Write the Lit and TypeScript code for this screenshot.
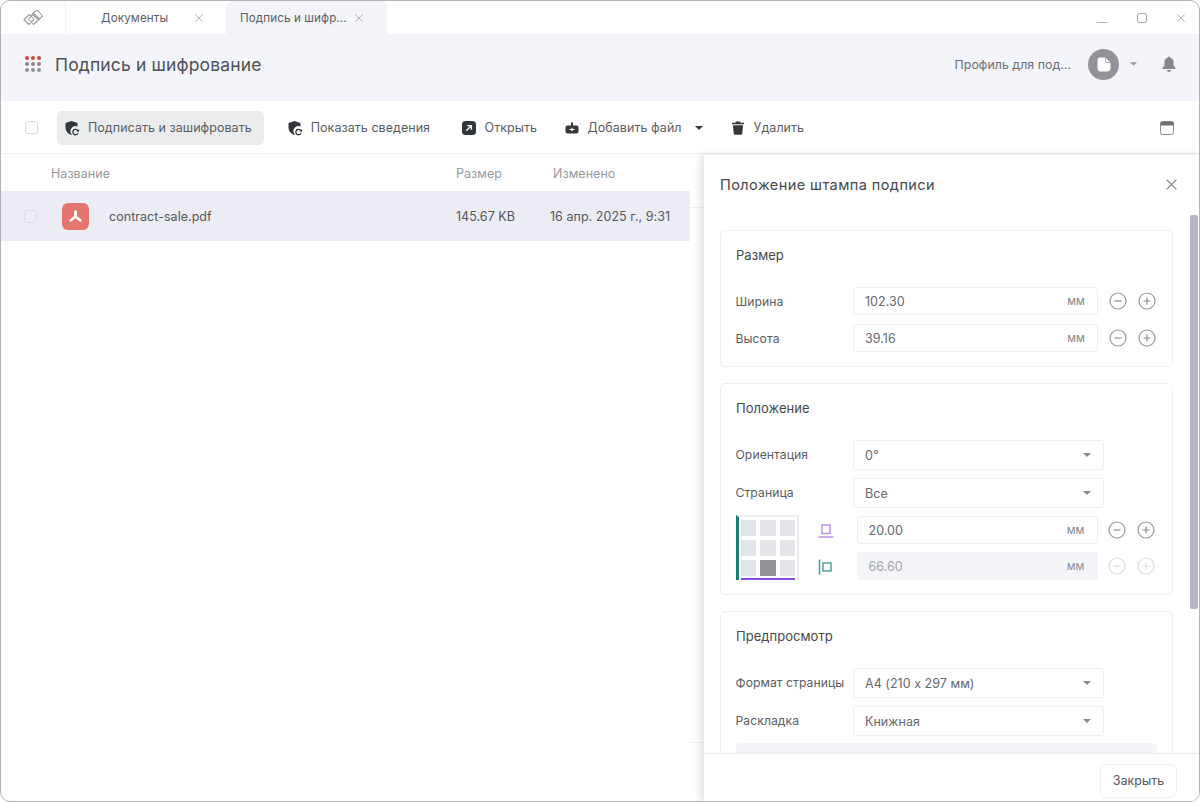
import { LitElement, html, css, svg } from "lit";
import { customElement } from "lit/decorators.js";

const shieldIcon = html`<svg class="ico" viewBox="0 0 16 16"><path fill="#33363a" d="M7.500 1 13.500 3v3.600a5 5 0 0 0-6 7.600l.6.600-.6.200C3.800 13.800 1.500 11 1.500 7.300V3z"/><path fill="none" stroke="#33363a" stroke-width="1.300" d="M14.200 11.400a2.700 2.700 0 1 0-.2 1.800"/><path fill="#33363a" d="M12.300 11.500h2.800V9z"/></svg>`;
const openIcon = html`<svg class="ico" viewBox="0 0 16 16"><rect x="1" y="1" width="14" height="14" rx="3.500" fill="#33363a"/><path d="M5.300 10.700 10 6M6.300 5.600H10.400V9.700" fill="none" stroke="#fff" stroke-width="1.300"/></svg>`;
const addIcon = html`<svg class="ico" viewBox="0 0 16 16"><path fill="#33363a" d="M3.500 5.500H7V2.500h2v3h3.500a2 2 0 0 1 2 2v4a2 2 0 0 1-2 2h-9a2 2 0 0 1-2-2v-4a2 2 0 0 1 2-2z"/><path d="M5.500 9.500h5M8 7.800v3.400" stroke="#fff" stroke-width="1.200"/></svg>`;
const trashIcon = html`<svg class="ico" viewBox="0 0 16 16"><path fill="#33363a" d="M6 1.500h4l.6 1.200H14v1.600H2V2.700h3.400zM3 5.300h10l-.7 8.200a1.500 1.500 0 0 1-1.500 1.300H5.200a1.500 1.500 0 0 1-1.500-1.300z"/></svg>`;
const closeIcon = (s: number, c: string) => html`<svg class="x" width=${s} height=${s} viewBox="0 0 12 12"><path d="M1.500 1.500l9 9M10.500 1.500l-9 9" stroke=${c} stroke-width="1" fill="none"/></svg>`;
const caret = html`<svg class="caret" viewBox="0 0 8 4"><path d="M0 0h8L4 4z"/></svg>`;

const round = (plus: boolean, off = false) => html`<svg class="round" viewBox="0 0 18 18" width="18" height="18"><circle cx="9" cy="9" r="8" fill="none" stroke=${off ? "#dcdde0" : "#96989c"} stroke-width="1.200"/><path d=${plus ? "M5.500 9h7M9 5.500v7" : "M5.500 9h7"} stroke=${off ? "#dcdde0" : "#8a8c90"} stroke-width="1.200"/></svg>`;

const dots = [0, 1, 2].flatMap((r) =>
  [0, 1, 2].map((c) => svg`<circle cx=${2 + c * 6} cy=${2 + r * 6} r="2" fill=${r === 0 ? "#c9473d" : r === 1 ? "#96827f" : "#8f9095"}/>`)
);

@customElement("app-root")
export class AppRoot extends LitElement {
  static styles = css`
    :host { display: block; width: 1200px; height: 802px; font-family: Inter, "Liberation Sans", sans-serif; color: #5a5d61; font-size: 12.500px; letter-spacing: 0.040px; }
    * { box-sizing: border-box; }
    .win { position: relative; width: 1200px; height: 802px; background: #fff; border: 1px solid #b4b4b6; border-radius: 10px; overflow: hidden; display: flex; flex-direction: column; }
    .tabs { height: 33px; flex: none; display: flex; align-items: stretch; }
    .logo { width: 65px; display: flex; align-items: center; justify-content: center; border-right: 1px solid #f1f1f3; }
    .tab { display: flex; align-items: center; font-size: 11.700px; letter-spacing: 0.080px; white-space: nowrap; }
    .t1 { width: 160px; padding-left: 35px; gap: 25.500px; }
    .t2 { width: 160.500px; padding-left: 14px; gap: 7px; background: #f3f5fa; border-radius: 6px 6px 0 0; }
    .winbtns { margin-left: auto; display: flex; align-items: center; padding-right: 13.500px; }
    .winbtns svg { display: block; }
    .w1 { margin-right: 30px; } .w2 { margin-right: 29px; }
    .band { height: 67px; flex: none; background: #f3f5fa; display: flex; align-items: center; padding: 0 23px 7px 24px; }
    .band h1 { font-size: 17.500px; font-weight: 400; margin: 0 0 0 14px; letter-spacing: 0.140px; color: #4e5155; }
    .prof { margin-left: auto; display: flex; align-items: center; }
    .ptext { color: #6b6e72; font-size: 12.350px; margin-right: 17px; }
    .avatar { width: 31px; height: 31px; border-radius: 50%; background: #929398; display: flex; align-items: center; justify-content: center; margin-right: 11px; }
    .prof .caret { width: 7px; height: 4px; fill: #9a9ca0; margin-right: 25px; }
    .bar { height: 53px; flex: none; display: flex; align-items: center; padding: 1px 25px 0 24px; border-bottom: 1px solid #f0f0f2; }
    .check { width: 13px; height: 13px; border: 1px solid #d9dadc; border-radius: 3px; background: #fff; flex: none; }
    .act { height: 34px; display: flex; align-items: center; gap: 8px; padding: 0 12px 0 7px; border-radius: 5px; white-space: nowrap; margin-left: 8px; }
    .act.on { background: #ebecee; margin-left: 19px; }
    .act.info2 { margin-left: 16px; }
    .act.open { margin-left: 11.500px; }
    .act.add { margin-left: 7.500px; }
    .ico { width: 16px; height: 16px; flex: none; }
    .act .caret { width: 8px; height: 4px; fill: #33363a; margin-left: 5px; }
    .spacer { margin-left: auto; }
    .thead { height: 37px; flex: none; display: grid; grid-template-columns: 50px 405px 97px auto; align-items: center; color: #96989c; width: 689px; padding-top: 1px; }
    .row { height: 50px; flex: none; width: 689px; background: #ecedf4; display: grid; grid-template-columns: 61px 47px 347px 94px auto; align-items: center; }
    .row .check { margin-left: 23px; background: #eceef3; border-color: #dcdde2; }
    .pdf { width: 27px; height: 27px; border-radius: 6px; background: #e5766f; display: flex; align-items: center; justify-content: center; }
    .row span { color: #55585c; white-space: nowrap; }
    .stub { position: absolute; left: 689px; width: 16px; height: 1px; background: #efeff2; }
    .panel { position: absolute; left: 703px; top: 154px; width: 496px; bottom: 0; background: #fff; box-shadow: -3px 0 8px rgba(0,0,0,.13); display: flex; flex-direction: column; }
    .phead { height: 60px; flex: none; display: flex; align-items: center; justify-content: space-between; padding: 0 22.500px 2px 16px; }
    .phead h2 { margin: 0; font-size: 14.500px; font-weight: 400; color: #45484c; letter-spacing: 0.430px; }
    .pbody { flex: 1; min-height: 0; overflow: hidden; padding: 15px 27px 0 16px; display: flex; flex-direction: column; gap: 16px; position: relative; }
    .card { border: 1px solid #eeeff2; border-radius: 5px; padding: 0 15px; flex: none; }
    .card h3 { margin: 0 0 6px; font-size: 13px; font-weight: 400; color: #45484c; height: 50px; line-height: 48px; }
    .c1 { height: 137px; } .c2 { height: 212px; }
    .frow { display: flex; align-items: center; }
    .frow label { width: 117px; flex: none; font-size: 12.200px; letter-spacing: 0.050px; position: relative; left: -0.500px; }
    .sr label { top: -1px; }
    .inp { border: 1px solid #eeeff2; border-radius: 3px; height: 28px; display: flex; align-items: center; justify-content: space-between; padding: 0 12px 0 11px; background: #fff; flex: none; color: #66696d; }
    .unit { color: #85878b; font-size: 11.500px; }
    .num { width: 245px; }
    .short { width: 241px; }
    .r1 { margin-bottom: 9px; }
    .round { margin-left: 10.500px; flex: none; display: block; }
    .round + .round { margin-left: 11px; }
    .sel { width: 251px; height: 30px; }
    .sel .caret { width: 8px; height: 4px; fill: #85878b; }
    .sr { margin-bottom: 8px; }
    .pos { display: flex; align-items: flex-start; margin-top: -1px; }
    .grid { width: 63px; height: 65px; flex: none; position: relative; margin-left: -0.500px; padding: 3px 0 0 2px; display: grid; grid-template-columns: repeat(3, 15.500px); grid-template-rows: repeat(3, 15.500px); gap: 4.500px 4px; align-content: start; border-left: 3px solid #1d7d74; border-right: 2px solid #e9eaec; border-top: 2px solid #eeeff1; }
    .grid i { background: #e3e5e9; display: block; }
    .grid i.sel2 { background: #929398; }
    .grid::after { content: ""; position: absolute; left: 2px; right: 2px; bottom: 0; height: 2px; background: #8a4fd8; }
    .posf { display: flex; flex-direction: column; gap: 8px; margin-top: 1px; }
    .pr { display: flex; align-items: center; }
    .pr svg.pi { width: 16px; height: 16px; margin: 2px 23px 0 19px; flex: none; }
    .off { background: #f4f5f9; border-color: #f4f5f9; color: #a3a5a9; }
    .off .unit { color: #8f9195; }
    .c3 { height: 300px; position: relative; }
    .info { height: 60px; background: #f3f4f9; border-radius: 5px; margin-top: -1px; }
    .scroll { position: absolute; left: 486px; top: 60px; width: 8px; height: 394px; background: #b3b5c5; border-radius: 2px; }
    .pfoot { height: 48px; flex: none; border-top: 1px solid #ebecef; background: #fff; display: flex; align-items: center; justify-content: flex-end; padding: 6px 23px 0 0; position: relative; }
    .close { height: 34px; width: 77px; border: 1px solid #f0f0f3; border-radius: 6px; display: flex; align-items: center; justify-content: center; color: #55585c; }
  `;

  private numRow(label: string, value: string, cls = "") {
    return html`<div class="frow ${cls}"><label>${label}</label><div class="inp num"><span>${value}</span><span class="unit">мм</span></div>${round(false)}${round(true)}</div>`;
  }
  private selRow(label: string, value: string) {
    return html`<div class="frow sr"><label>${label}</label><div class="inp sel"><span>${value}</span>${caret}</div></div>`;
  }

  render() {
    return html`<div class="win">
      <div class="tabs">
        <div class="logo"><svg width="21" height="16" viewBox="0 0 21 16" fill="none" stroke="#9a9ca0" stroke-width="1.100" stroke-linejoin="round"><path d="M6.500 4.500 1 9.500l5 5 5-5zM10.500 3.500 5.500 9l5 5.500 6-5.500zM12 1.500 9 4.500l6.500 5 4-3.500-4-4.500a2 2 0 0 0-3.500 0z"/></svg></div>
        <div class="tab t1"><span>Документы</span>${closeIcon(10, "#a3a5a9")}</div>
        <div class="tab t2"><span>Подпись и шифр...</span>${closeIcon(10, "#a3a5a9")}</div>
        <div class="winbtns">
          <svg class="w1" width="10" height="11" viewBox="0 0 10 11"><path d="M0 10.500h10" stroke="#b0b1b4"/></svg>
          <svg class="w2" width="10" height="10" viewBox="0 0 10 10"><rect x=".5" y=".5" width="9" height="9" rx="1.500" fill="none" stroke="#a8a9ac"/></svg>
          ${closeIcon(10, "#a8a9ac")}
        </div>
      </div>
      <div class="band">
        <svg width="16" height="16" viewBox="0 0 16 16">${dots}</svg>
        <h1>Подпись и шифрование</h1>
        <div class="prof">
          <span class="ptext">Профиль для под...</span>
          <div class="avatar"><svg width="14" height="15" viewBox="0 0 14 15"><path fill="#fff" d="M3 .5h5.500l5 5V11a3.500 3.500 0 0 1-3.500 3.500H3.500A3 3 0 0 1 .5 11.500V3A2.500 2.500 0 0 1 3 .5z"/><path d="M8.500 .5v3a2 2 0 0 0 2 2h3" fill="none" stroke="#929398" stroke-width=".8"/></svg></div>
          ${caret}
          <svg width="14" height="16" viewBox="0 0 14 16"><path fill="#85878b" d="M7 0.500a1.200 1.200 0 0 1 1.200 1.200A4.500 4.500 0 0 1 11.500 6v3.500L13.500 12v1H.5v-1l2-2.500V6a4.500 4.500 0 0 1 3.300-4.300A1.200 1.200 0 0 1 7 .5zM5 14h4a2 2 0 0 1-4 0z"/></svg>
        </div>
      </div>
      <div class="bar">
        <div class="check"></div>
        <div class="act on">${shieldIcon}<span>Подписать и зашифровать</span></div>
        <div class="act info2">${shieldIcon}<span>Показать сведения</span></div>
        <div class="act open">${openIcon}<span>Открыть</span></div>
        <div class="act add">${addIcon}<span>Добавить файл</span>${caret}</div>
        <div class="act">${trashIcon}<span>Удалить</span></div>
        <svg class="spacer" width="14" height="14" viewBox="0 0 14 14"><rect x=".5" y=".5" width="13" height="13" rx="2" fill="none" stroke="#8a8c90" stroke-width="1"/><path d="M.5 2.500a2 2 0 0 1 2-2h9a2 2 0 0 1 2 2v2H.5z" fill="#6e7074"/></svg>
      </div>
      <div class="thead"><span></span><span>Название</span><span>Размер</span><span>Изменено</span></div>
      <div class="row">
        <div class="check"></div>
        <div class="pdf"><svg width="15" height="13" viewBox="0 0 15 13" fill="none" stroke="#fff"><path d="M7.500 1.800v3.200" stroke-width="3" stroke-linecap="round"/><path d="M7 7 2.500 10.500M8 7l4.500 3.500" stroke-width="2.400" stroke-linecap="round"/><circle cx="7.500" cy="6.500" r="1" fill="#fff" stroke="none"/></svg></div>
        <span>contract-sale.pdf</span><span>145.67 KB</span><span>16 апр. 2025 г., 9:31</span>
      </div>
      <div class="stub" style="top:206px"></div>
      <div class="stub" style="top:741px"></div>
      <div class="panel">
        <div class="phead"><h2>Положение штампа подписи</h2>${closeIcon(13, "#7d7f83")}</div>
        <div class="pbody">
          <section class="card c1">
            <h3>Размер</h3>
            ${this.numRow("Ширина", "102.30", "r1")}
            ${this.numRow("Высота", "39.16")}
          </section>
          <section class="card c2">
            <h3>Положение</h3>
            ${this.selRow("Ориентация", "0°")}
            ${this.selRow("Страница", "Все")}
            <div class="pos">
              <div class="grid">
                <i></i><i></i><i></i><i></i><i></i><i></i><i></i><i class="sel2"></i><i></i>
              </div>
              <div class="posf">
                <div class="pr">
                  <svg class="pi" viewBox="0 0 16 16" fill="none" stroke="#b78be6" stroke-width="1.400"><rect x="4" y="2" width="8" height="8.500"/><path d="M.5 14h15" stroke-width="1.400"/></svg>
                  <div class="inp short"><span>20.00</span><span class="unit">мм</span></div>${round(false)}${round(true)}
                </div>
                <div class="pr">
                  <svg class="pi" viewBox="0 0 16 16" fill="none" stroke="#3f9c94" stroke-width="1.400"><path d="M1.500 .5v15" stroke-width="1.500"/><rect x="5" y="4" width="8" height="8"/></svg>
                  <div class="inp short off"><span>66.60</span><span class="unit">мм</span></div>${round(false, true)}${round(true, true)}
                </div>
              </div>
            </div>
          </section>
          <section class="card c3">
            <h3>Предпросмотр</h3>
            ${this.selRow("Формат страницы", "A4 (210 x 297 мм)")}
            ${this.selRow("Раскладка", "Книжная")}
            <div class="info"></div>
          </section>
        </div>
        <div class="scroll"></div>
        <div class="pfoot"><div class="close">Закрыть</div></div>
      </div>
    </div>`;
  }
}
